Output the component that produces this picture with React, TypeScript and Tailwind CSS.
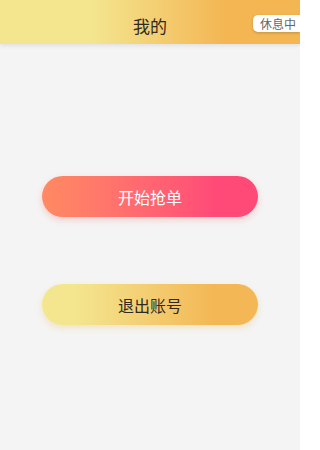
export default function App() {
  return (
    <div
      className="min-h-[450px] w-[300px] overflow-hidden bg-[#f4f4f4]"
      style={{ fontFamily: '"Noto Sans CJK SC", "Noto Sans", sans-serif' }}
    >
      <header className="relative flex h-[44px] items-center justify-center bg-gradient-to-r from-[#f3e68f] from-30% to-[#f3b653] to-75% pt-[6px] shadow-[0_2px_4px_rgba(0,0,0,0.08)]">
        <h1 className="text-[17px] leading-none text-[#2f2a22]">我的</h1>
        <span className="absolute right-0 top-[15px] flex h-[17px] items-center rounded-l-[5px] bg-white pl-[7px] pr-[4px] text-[12px] leading-none text-[#666] shadow-[0_1px_3px_rgba(0,0,0,0.2)]">
          休息中
        </span>
      </header>

      <div className="flex flex-col items-center pt-[132px]">
        <button className="h-[41px] w-[216px] rounded-full bg-gradient-to-r from-[#ff8a62] to-[#ff4a78] to-80% text-[16px] text-white shadow-[0_3px_6px_rgba(255,110,110,0.3)]">
          开始抢单
        </button>
        <button className="mt-[67px] h-[41px] w-[216px] rounded-full bg-gradient-to-r from-[#f3e68f] from-15% to-[#f3b755] to-80% text-[16px] text-[#2f2a22] shadow-[0_3px_6px_rgba(240,190,90,0.3)]">
          退出账号
        </button>
      </div>
    </div>
  );
}
